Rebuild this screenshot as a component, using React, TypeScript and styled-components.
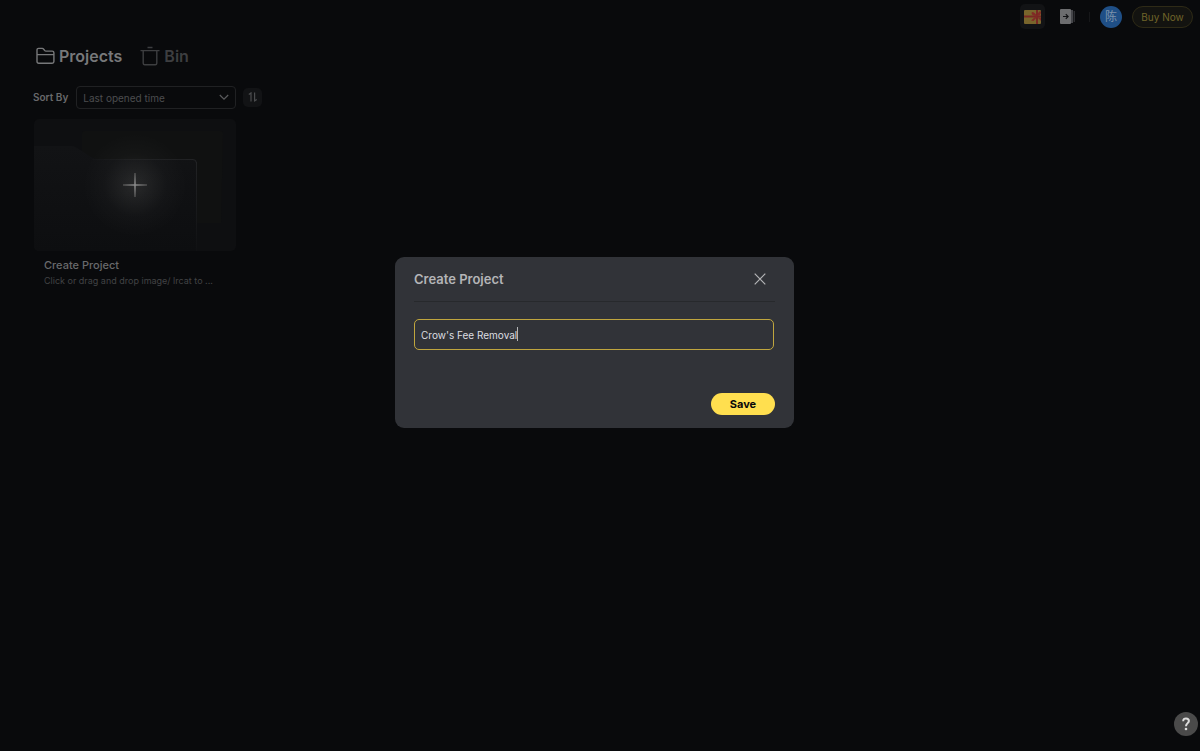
import React, { useState } from "react";
import styled, { createGlobalStyle } from "styled-components";

const GlobalStyle = createGlobalStyle`
  *, *::before, *::after { box-sizing: border-box; }
  html { background: #090a0c; }
  body {
    margin: 0;
    background: #090a0c;
    color: #77787a;
    font-family: Inter, "Noto Sans CJK SC", sans-serif;
    -webkit-font-smoothing: antialiased;
  }
  button, input, select { font-family: inherit; margin: 0; }
  svg { display: block; }
`;

const Page = styled.div`
  min-height: 100vh;
  display: flex;
  flex-direction: column;
`;

const TopBar = styled.header`
  display: flex;
  align-items: center;
  justify-content: flex-end;
  height: 33px;
  padding-right: 7px;
`;

const IconButton = styled.button<{ $size: number; $filled?: boolean }>`
  display: flex;
  align-items: center;
  justify-content: center;
  width: ${(p) => p.$size}px;
  height: ${(p) => p.$size}px;
  padding: 0;
  border: 0;
  border-radius: 5px;
  background: ${(p) => (p.$filled ? "#121315" : "transparent")};
  color: inherit;
`;

const TopTools = styled.div`
  display: flex;
  align-items: center;
  gap: 10px;
`;

const Divider = styled.span`
  width: 1px;
  height: 10px;
  margin: 0 10px 0 9px;
  background: #161719;
`;

const Avatar = styled.button`
  width: 22px;
  height: 22px;
  padding: 0;
  margin-right: 10px;
  border: 0;
  border-radius: 50%;
  background: #1f4f86;
  color: #7c92ab;
  font-size: 12px;
  line-height: 22px;
`;

const BuyButton = styled.button`
  width: 61px;
  height: 22px;
  padding: 0;
  border: 1px solid #2e2a16;
  border-radius: 11px;
  background: #131310;
  color: #6f6329;
  font-size: 10px;
  line-height: 20px;
  white-space: nowrap;
`;

const Main = styled.main`
  padding: 12px 33px;
`;

const Tabs = styled.nav`
  display: flex;
  gap: 18px;
  padding-left: 3px;
`;

const Tab = styled.a<{ $active?: boolean }>`
  display: flex;
  align-items: center;
  gap: 4px;
  height: 22px;
  color: ${(p) => (p.$active ? "#77787a" : "#3d3e40")};
  font-size: 16px;
  font-weight: 600;
  line-height: 22px;
  text-decoration: none;
`;

const SortBar = styled.div`
  display: flex;
  align-items: center;
  gap: 7px;
  height: 24px;
  margin-top: 18px;
`;

const SortLabel = styled.label`
  padding-right: 1px;
  color: #68696b;
  font-size: 10px;
  font-weight: 600;
  line-height: 16px;
`;

const SelectBox = styled.div`
  display: grid;
  align-items: center;
  width: 160px;

  > * { grid-area: 1 / 1; }
  > svg { justify-self: end; margin-right: 7px; pointer-events: none; }
`;

const Select = styled.select`
  appearance: none;
  width: 100%;
  height: 23px;
  padding: 1px 24px 0 6px;
  border: 1px solid #202123;
  border-radius: 4px;
  background: transparent;
  color: #4c4d4f;
  font-size: 10px;
`;

const Grid = styled.section`
  display: grid;
  grid-template-columns: repeat(auto-fill, 202px);
  gap: 20px;
  margin-top: 10px;
  padding-left: 1px;
`;

const Card = styled.button`
  display: flex;
  flex-direction: column;
  padding: 0;
  border: 0;
  background: none;
  text-align: left;
`;

const CardBody = styled.span`
  display: flex;
  flex-direction: column;
  padding: 5px 10px;
`;

const CardTitle = styled.span`
  color: #68696b;
  font-size: 11px;
  font-weight: 500;
  line-height: 18px;
`;

const CardText = styled.span`
  color: #424345;
  font-size: 9px;
  line-height: 14px;
  white-space: nowrap;
`;

const Overlay = styled.div`
  position: fixed;
  inset: 0;
  display: flex;
  align-items: center;
  justify-content: center;
  padding: 0 11px 66px 0;
`;

const Dialog = styled.form`
  width: 399px;
  padding: 0 19px 13px;
  border-radius: 9px;
  background: #313338;
`;

const DialogHeader = styled.header`
  display: flex;
  align-items: center;
  justify-content: space-between;
  height: 45px;
  padding-right: 5px;
  border-bottom: 1px solid #27292c;
`;

const DialogTitle = styled.h2`
  margin: 0;
  color: #b4b5b7;
  font-size: 13px;
  font-weight: 600;
  line-height: 18px;
`;

const Field = styled.div`
  position: relative;
  margin: 17px 1px 43px 0;
`;

const NameInput = styled.input`
  display: block;
  width: 100%;
  height: 31px;
  padding: 0 6px;
  border: 1px solid #c0a63e;
  border-radius: 5px;
  outline: 0;
  background: transparent;
  color: #dddee0;
  caret-color: transparent;
  font-size: 10px;
`;

const Mirror = styled.span`
  position: absolute;
  top: 8px;
  left: 7px;
  height: 14px;
  border-right: 1px solid #b4b5b7;
  color: transparent;
  font-size: 10px;
  line-height: 14px;
  white-space: pre;
  pointer-events: none;
`;

const Actions = styled.div`
  display: flex;
  justify-content: flex-end;
`;

const SaveButton = styled.button`
  width: 64px;
  height: 22px;
  padding: 0;
  border: 0;
  border-radius: 11px;
  background: #ffdf4f;
  color: #08080a;
  font-size: 11px;
  font-weight: 700;
  line-height: 22px;
`;

const HelpButton = styled.button`
  position: fixed;
  right: 2px;
  bottom: 15px;
  display: flex;
  align-items: center;
  justify-content: center;
  width: 24px;
  height: 24px;
  padding: 0;
  border: 0;
  border-radius: 50%;
  background: #4a4a4a;
  color: #dcdcdc;
`;

const GiftIcon = () => (
  <svg width="17" height="14" viewBox="0 0 17 14" aria-hidden="true">
    <rect width="17" height="14" rx="1" fill="#79652c" />
    <path d="M0 5.500h17v2H0z" fill="#7a2823" />
    <path d="M12 0h2v14h-2z" fill="#7a2823" />
    <path d="M13 6C10.500 2 8 1 7.500 3c0 2 2 3 5.500 3M13 6C14 1 17 0 17 2.500 17 5 15 6 13 6M12 6 7 10.500l2.500.5L13 7M13 7l4 4v-3z" fill="#822a26" />
  </svg>
);

const ExportIcon = () => (
  <svg width="16" height="15" viewBox="0 0 16 15" aria-hidden="true">
    <rect width="11" height="15" rx="1" fill="#6c6d6f" />
    <path d="M3 7.500h5M5.800 5.200l2.300 2.300-2.300 2.300" fill="none" stroke="#111214" strokeWidth="1.200" />
    <path d="M11 1h2v13h-2z" fill="#45464a" />
    <path d="M13.500 2H15v11h-1.500z" fill="#2c2d30" />
  </svg>
);

const FolderIcon = () => (
  <svg width="19" height="18" viewBox="0 0 19 18" fill="none" stroke="currentColor" strokeWidth="1.400" strokeLinejoin="round" aria-hidden="true">
    <path d="M1 14.500V3c0-1 .7-1.600 1.600-1.600h3.700c.5 0 .9.200 1.200.6l1.300 1.600c.3.400.7.500 1.200.5h6.200c1 0 1.700.7 1.700 1.700v8.700c0 1-.7 1.700-1.700 1.700H2.700c-1 0-1.700-.7-1.700-1.700ZM1 7.600h16.900" />
  </svg>
);

const BinIcon = () => (
  <svg width="20" height="20" viewBox="0 0 20 20" fill="none" stroke="currentColor" strokeWidth="1.400" aria-hidden="true">
    <path d="M7.500 1.500h5M.5 4.600h19M3.200 4.600v12.600c0 .9.600 1.500 1.500 1.500h10.600c.9 0 1.500-.6 1.500-1.500V4.600" />
  </svg>
);

const ChevronIcon = () => (
  <svg width="10" height="7" viewBox="0 0 10 7" fill="none" stroke="#5a5b5d" strokeWidth="1.200" aria-hidden="true">
    <path d="m.8 1 4.200 4.200L9.200 1" />
  </svg>
);

const OrderIcon = () => (
  <svg width="10" height="10" viewBox="0 0 10 10" fill="none" stroke="#4b4c4e" strokeWidth="1.200" aria-hidden="true">
    <path d="M.8 2.400 3 .9V9.500M6.600.5v8.300L8.800 7.400" />
  </svg>
);

const CloseIcon = () => (
  <svg width="12" height="12" viewBox="0 0 12 12" fill="none" stroke="#b4b5b7" strokeWidth="1.200" aria-hidden="true">
    <path d="m.7.7 10.600 10.600M11.300.7.7 11.300" />
  </svg>
);

const HelpIcon = () => (
  <svg width="10" height="14" viewBox="0 0 10 14" aria-hidden="true">
    <path d="M2.200 4.200C2.200 2.300 3.400 1.400 5 1.400s2.900 1 2.900 2.600C7.900 6.100 5 6.300 5 9.200" fill="none" stroke="currentColor" strokeWidth="2" />
    <circle cx="5" cy="12" r="1.300" fill="currentColor" />
  </svg>
);

const FolderArt = () => (
  <svg width="202" height="132" viewBox="0 0 202 132" aria-hidden="true">
    <defs>
      <radialGradient id="glow" gradientUnits="userSpaceOnUse" cx="101" cy="66" r="52">
        <stop offset="0" stopColor="#fffff4" stopOpacity=".1" />
        <stop offset=".3" stopColor="#fffff4" stopOpacity=".06" />
        <stop offset=".6" stopColor="#fffff4" stopOpacity=".02" />
        <stop offset="1" stopColor="#fffff4" stopOpacity="0" />
      </radialGradient>
      <linearGradient id="front" x1="0" y1="0" x2="0" y2="1">
        <stop offset="0" stopColor="#121315" />
        <stop offset="1" stopColor="#0d0e10" />
      </linearGradient>
      <linearGradient id="edge" x1="0" y1="0" x2="1" y2="0">
        <stop offset="0" stopColor="#131416" />
        <stop offset="1" stopColor="#222325" />
      </linearGradient>
      <linearGradient id="side" x1="0" y1="0" x2="0" y2="1">
        <stop offset="0" stopColor="#222325" />
        <stop offset="1" stopColor="#101113" />
      </linearGradient>
      <radialGradient id="plus" gradientUnits="userSpaceOnUse" cx="101" cy="66" r="13">
        <stop offset="0" stopColor="#8c8c8c" />
        <stop offset="1" stopColor="#464646" />
      </radialGradient>
      <clipPath id="card"><rect width="202" height="132" rx="5" /></clipPath>
    </defs>
    <g clipPath="url(#card)">
      <rect width="202" height="132" fill="#0e0f11" />
      <path d="M48 15q0-3 3-3h135q3 0 3 3l-2 89H48z" fill="#101111" />
      <path d="M0 27h37q3 0 6 2l14 9q3 2 6 2h97q3 0 3 3v89H0z" fill="url(#front)" />
      <path d="M59 40.500h100q3 0 3.500 3.500" fill="none" stroke="url(#edge)" />
      <path d="M162 43h1v89h-1z" fill="url(#side)" />
      <circle cx="101" cy="66" r="52" fill="url(#glow)" />
      <path d="M89 65.200h24v1.600H89zM100.200 54h1.600v24h-1.600z" fill="url(#plus)" />
    </g>
  </svg>
);

export default function App() {
  const [name, setName] = useState("Crow's Fee Removal");

  return (
    <>
      <GlobalStyle />
      <Page>
        <TopBar>
          <TopTools>
            <IconButton $size={25} $filled aria-label="Gifts"><GiftIcon /></IconButton>
            <IconButton $size={25} aria-label="Export"><ExportIcon /></IconButton>
          </TopTools>
          <Divider />
          <Avatar aria-label="Account">陈</Avatar>
          <BuyButton>Buy Now</BuyButton>
        </TopBar>
        <Main>
          <Tabs>
            <Tab href="#projects" $active><FolderIcon />Projects</Tab>
            <Tab href="#bin"><BinIcon />Bin</Tab>
          </Tabs>
          <SortBar>
            <SortLabel htmlFor="sort">Sort By</SortLabel>
            <SelectBox>
              <Select id="sort"><option>Last opened time</option></Select>
              <ChevronIcon />
            </SelectBox>
            <IconButton $size={19} $filled aria-label="Reverse order"><OrderIcon /></IconButton>
          </SortBar>
          <Grid>
            <Card>
              <FolderArt />
              <CardBody>
                <CardTitle>Create Project</CardTitle>
                <CardText>Click or drag and drop image/ lrcat to ...</CardText>
              </CardBody>
            </Card>
          </Grid>
        </Main>
      </Page>
      <Overlay>
        <Dialog role="dialog" aria-labelledby="dialog-title" onSubmit={(e) => e.preventDefault()}>
          <DialogHeader>
            <DialogTitle id="dialog-title">Create Project</DialogTitle>
            <IconButton type="button" $size={20} aria-label="Close"><CloseIcon /></IconButton>
          </DialogHeader>
          <Field>
            <NameInput aria-label="Project name" value={name} onChange={(e) => setName(e.target.value)} autoFocus />
            <Mirror aria-hidden="true">{name}</Mirror>
          </Field>
          <Actions>
            <SaveButton type="submit">Save</SaveButton>
          </Actions>
        </Dialog>
      </Overlay>
      <HelpButton aria-label="Help"><HelpIcon /></HelpButton>
    </>
  );
}
